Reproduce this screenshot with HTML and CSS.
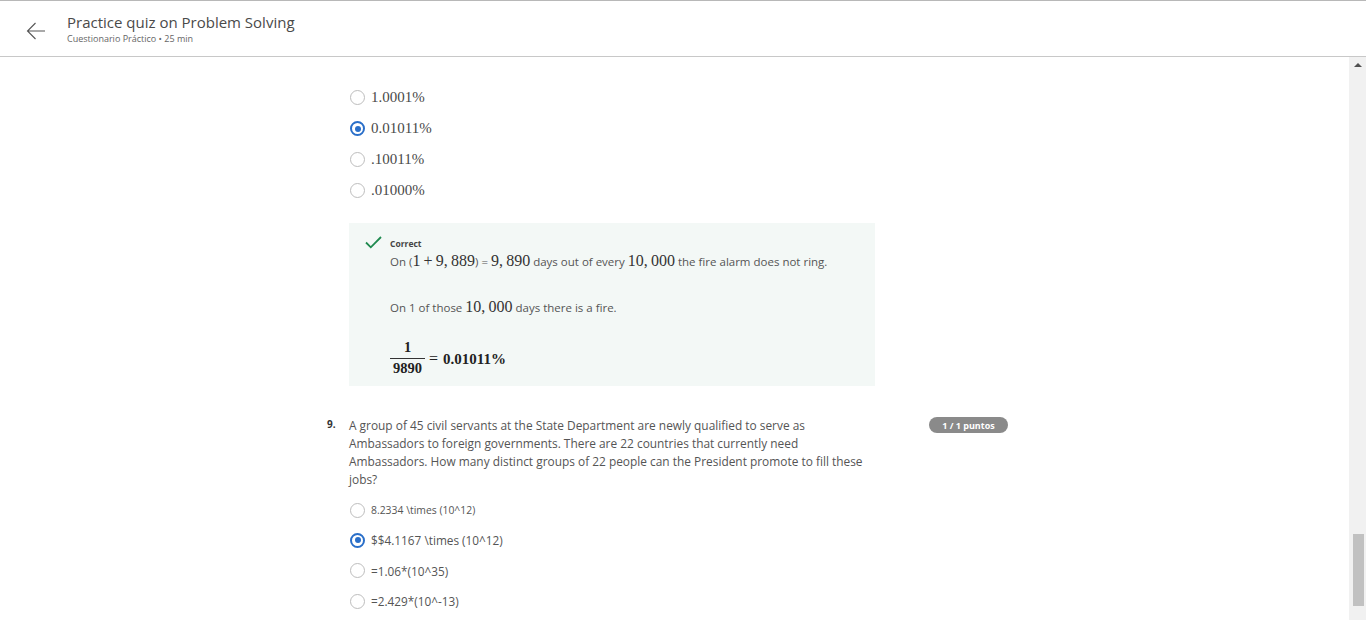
FILE: index.html
```html
<!DOCTYPE html>
<html lang="en">
<head>
<meta charset="utf-8">
<title>Practice quiz on Problem Solving</title>
<link rel="stylesheet" href="styles.css">
</head>
<body>
<header class="topbar">
  <a class="back" href="#" aria-label="Back">
    <svg width="20" height="18" viewBox="0 0 20 18"><path d="M19 9H1.5M9.5 1L1.5 9l8 8" fill="none" stroke="#555" stroke-width="1.1"/></svg>
  </a>
  <div class="titles">
    <h1 class="title">Practice quiz on Problem Solving</h1>
    <div class="subtitle">Cuestionario Práctico • 25 min</div>
  </div>
</header>
<div class="viewport">
  <main class="content">
    <div class="options serif">
      <div class="opt"><span class="radio"></span><span>1.0001%</span></div>
      <div class="opt"><span class="radio on"></span><span>0.01011%</span></div>
      <div class="opt"><span class="radio"></span><span>.10011%</span></div>
      <div class="opt"><span class="radio"></span><span>.01000%</span></div>
    </div>
    <section class="feedback">
      <div class="fb-head">
        <svg class="check" width="17" height="13" viewBox="0 0 17 13"><path d="M1 6.5l4.8 4.8L16 1" fill="none" stroke="#1f8a4f" stroke-width="1.8"/></svg>
        <span class="correct">Correct</span>
      </div>
      <div class="fb-body">
        <p class="fb-line">On (<span class="m">1&#8201;+&#8201;9,&#8201;889</span>) = <span class="m">9,&#8201;890</span> days out of every <span class="m">10,&#8201;000</span> the fire alarm does not ring.</p>
        <p class="fb-line gap">On 1 of those <span class="m">10,&#8201;000</span> days there is a fire.</p>
        <div class="eq">
          <span class="frac"><span class="num">1</span><span class="den">9890</span></span>
          <span class="eqrest"><span class="eqsign">=</span>&#8201;0.01011%</span>
        </div>
      </div>
    </section>
    <section class="question">
      <div class="qnum">9.</div>
      <div class="qtext">A group of 45 civil servants at the State Department are newly qualified to serve as Ambassadors to foreign governments. There are 22 countries that currently need Ambassadors. How many distinct groups of 22 people can the President promote to fill these jobs?</div>
      <div class="badge">1 / 1 puntos</div>
    </section>
    <div class="options sans">
      <div class="opt"><span class="radio"></span><span class="small">8.2334 \times (10^12)</span></div>
      <div class="opt"><span class="radio on"></span><span>$$4.1167 \times (10^12)</span></div>
      <div class="opt"><span class="radio"></span><span>=1.06*(10^35)</span></div>
      <div class="opt"><span class="radio"></span><span>=2.429*(10^-13)</span></div>
    </div>
  </main>
  <div class="scrollbar">
    <div class="sb-up"></div>
    <div class="sb-thumb"></div>
  </div>
</div>
</body>
</html>
```
FILE: styles.css
```css
* { box-sizing: border-box; }
html, body { margin: 0; padding: 0; }
body {
  font-family: "Open Sans", "Liberation Sans", sans-serif;
  color: #555;
  background: #fff;
  height: 620px;
  overflow: hidden;
  border-top: 1px solid #b8b8b8;
}
.topbar {
  height: 56px;
  display: flex;
  align-items: flex-start;
  border-bottom: 1px solid #c8c8c8;
}
.back {
  display: block;
  margin: 21px 0 0 26px;
  width: 20px;
  height: 18px;
}
.titles { margin: 12px 0 0 21px; }
.title {
  margin: 0;
  font-size: 15px;
  font-weight: 400;
  color: #4a4a4a;
  line-height: 18px;
}
.subtitle {
  font-size: 9px;
  color: #666;
  line-height: 12px;
  margin-top: 2px;
}
.viewport {
  display: flex;
  height: 563px;
}
.content {
  flex: 1;
  padding: 25px 0 0 326px;
  overflow: hidden;
}
.options { padding-left: 23px; }
.opt {
  display: flex;
  align-items: center;
  height: 31px;
  gap: 6px;
}
.serif .opt { font-family: "Liberation Serif", "Times New Roman", serif; font-size: 15px; color: #4a4a4a; }
.sans .opt { font-size: 11.8px; color: #555; height: 30.3px; }
.sans .small { font-size: 10.4px; }
.radio {
  width: 15px;
  height: 15px;
  margin-left: 1px;
  border: 1.5px solid #bdbdbd;
  border-radius: 50%;
  flex: none;
  background: #fff;
  position: relative;
}
.radio.on { border: 2px solid #2a6fc9; }
.radio.on::after {
  content: "";
  position: absolute;
  left: 2.5px; top: 2.5px;
  width: 6px; height: 6px;
  border-radius: 50%;
  background: #2a6fc9;
}
.feedback {
  margin: 17px 0 0 23px;
  width: 526px;
  height: 163px;
  background: #f3f8f6;
  padding: 13px 0 0 16px;
}
.fb-head { display: flex; align-items: center; gap: 8px; height: 14px; }
.check { margin-top: -2px; }
.correct { font-size: 8.5px; font-weight: 700; color: #444; margin-top: 1px; }
.fb-body { padding-left: 25px; }
.fb-line { margin: 1px 0 0; font-size: 11.5px; line-height: 20px; color: #555; }
.fb-line.gap { margin-top: 25px; }
.m { font-family: "Liberation Serif", "Times New Roman", serif; font-size: 16px; color: #333; }
.eq { display: flex; align-items: center; margin-top: 21px; font-family: "Liberation Serif", "Times New Roman", serif; color: #222; }
.frac { display: inline-flex; flex-direction: column; align-items: center; font-weight: 700; font-size: 14.5px; line-height: 17px; }
.num { padding: 0 2px 2px; border-bottom: 1px solid #333; width: 100%; text-align: center; }
.den { padding: 1px 3px 0; }
.eqrest { font-size: 15px; font-weight: 700; margin-left: 4px; margin-top: 1px; }
.eqsign { font-weight: 400; font-size: 16px; margin-right: 2px; }
.question {
  display: grid;
  grid-template-columns: 23px 525px 1fr;
  width: 682px;
  margin-top: 30px;
  align-items: start;
}
.qnum { font-size: 10px; font-weight: 700; color: #333; line-height: 16px; padding-left: 1px; }
.qtext { font-size: 11.9px; line-height: 18px; color: #555; margin-top: 0; }
.badge {
  justify-self: end;
  width: 79px;
  height: 16px;
  border-radius: 8px;
  background: #8a8a8a;
  color: #fff;
  font-size: 9px;
  font-weight: 700;
  display: flex;
  align-items: center;
  justify-content: center;
  margin-top: 1px;
}
.question + .options { margin-top: 7px; }
.scrollbar {
  width: 17px;
  flex: none;
  background: #f1f1f1;
  display: flex;
  flex-direction: column;
  align-items: center;
}
.sb-up {
  margin-top: 6px;
  width: 0; height: 0;
  border-left: 4px solid transparent;
  border-right: 4px solid transparent;
  border-bottom: 4px solid #505050;
}
.sb-thumb {
  margin-top: 467px;
  width: 11px;
  margin-left: 2px;
  height: 72px;
  background: #c1c1c1;
}
```
